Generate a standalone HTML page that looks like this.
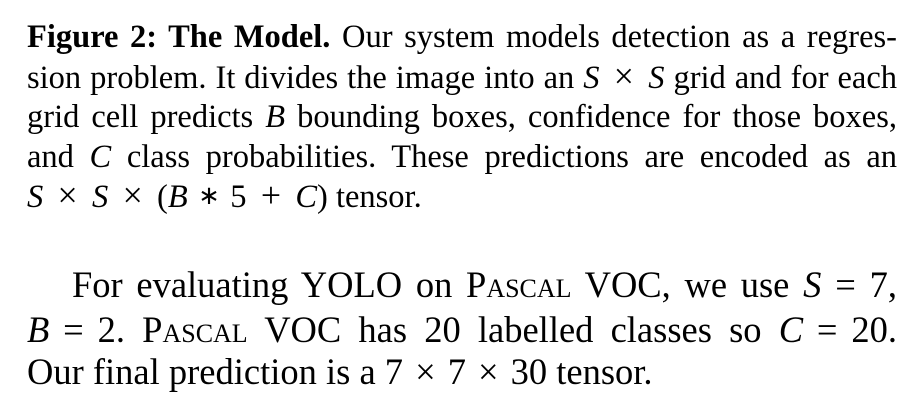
<!DOCTYPE html>
<html><head><meta charset="utf-8"><style>
html,body{margin:0;padding:0;background:#fff;width:920px;height:414px;overflow:hidden}
.l{position:absolute;left:27px;width:870px;height:36px;white-space:nowrap;font-family:"Liberation Serif",serif;color:#000;text-align:justify;text-align-last:justify}
.c{font-size:32.5px;line-height:33px}
.p{font-size:36.5px;line-height:36px}
.n{text-align-last:left}
i{font-style:italic}
.sc{font-variant:small-caps}
.o{margin:0 0.38em}
.c .o{font-size:1.1em;margin:0 0.4em;line-height:0}
.a{margin:0 0.4em;font-size:0.8em;line-height:0;position:relative;top:-0.1em}
.p.n .o{margin:0 0.33em}
</style></head><body>
<div class="l c" style="top:21px"><b>Figure 2: The Model.</b> Our system models detection as a regres-</div>
<div class="l c" style="top:62px">sion problem. It divides the image into an <i>S</i><span class="o">×</span><i>S</i> grid and for each</div>
<div class="l c" style="top:101px">grid cell predicts <i>B</i> bounding boxes, confidence for those boxes,</div>
<div class="l c" style="top:141px">and <i>C</i> class probabilities. These predictions are encoded as an</div>
<div class="l c n" style="top:181px"><i>S</i><span class="o">×</span><i>S</i><span class="o">×</span>(<i>B</i><span class="a">∗</span>5<span class="o">+</span><i>C</i>) tensor.</div>
<div class="l p" style="top:267px;left:72px;width:825px">For evaluating YOLO on <span class="sc">Pascal</span> VOC, we use <i>S</i><span class="o">=</span>7,</div>
<div class="l p" style="top:312px"><i>B</i><span class="o">=</span>2. <span class="sc">Pascal</span> VOC has 20 labelled classes so <i>C</i><span class="o">=</span>20.</div>
<div class="l p n" style="top:354px">Our final prediction is a 7<span class="o">×</span>7<span class="o">×</span>30 tensor.</div>
</body></html>
